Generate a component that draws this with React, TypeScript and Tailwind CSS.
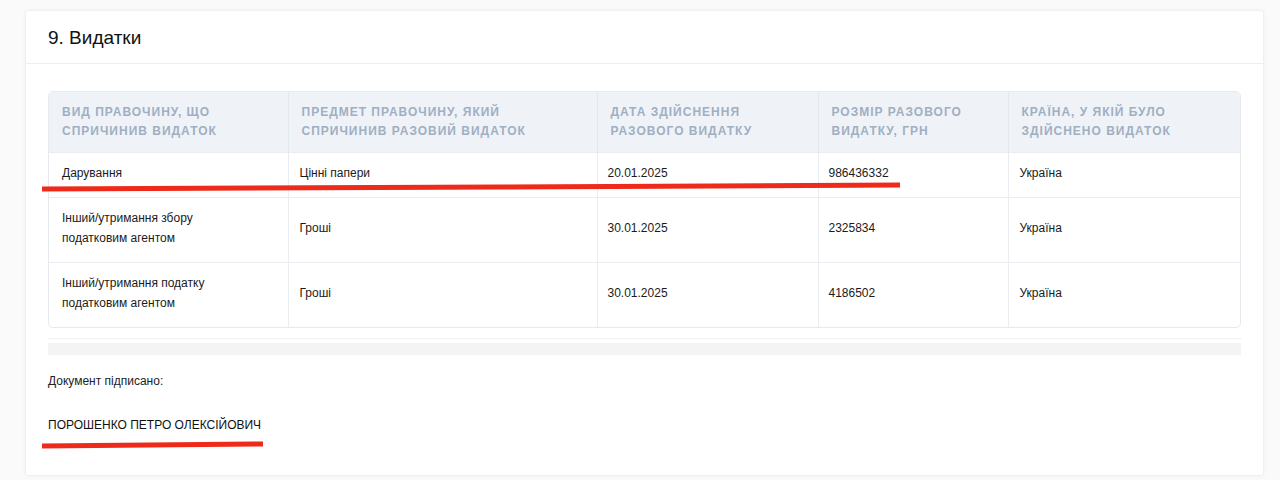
import React from 'react';

interface Expense {
  kind: string;
  subject: string;
  date: string;
  amount: string;
  country: string;
}

const columns = [
  { title: 'Вид правочину, що спричинив видаток', width: 'w-[239px]' },
  { title: 'Предмет правочину, який спричинив разовий видаток', width: 'w-[309px]' },
  { title: 'Дата здійснення разового видатку', width: 'w-[221px]' },
  { title: 'Розмір разового видатку, грн', width: 'w-[190px]' },
  { title: 'Країна, у якій було здійснено видаток', width: 'w-[234px]' },
];

const expenses: Expense[] = [
  { kind: 'Дарування', subject: 'Цінні папери', date: '20.01.2025', amount: '986436332', country: 'Україна' },
  { kind: 'Інший/утримання збору податковим агентом', subject: 'Гроші', date: '30.01.2025', amount: '2325834', country: 'Україна' },
  { kind: 'Інший/утримання податку податковим агентом', subject: 'Гроші', date: '30.01.2025', amount: '4186502', country: 'Україна' },
];

export default function App() {
  return (
    <div className="relative min-h-[480px] bg-[#fafafa] pt-[10px] pl-[25px] pr-[16px] font-['Liberation_Sans',Arial,sans-serif] text-[#1b1b1b]">
      <div className="w-[1239px] h-[466px] bg-white border border-[#f0f0f0] rounded-[3px] shadow-[0_0_4px_rgba(0,0,0,0.04)]">
        {/* Заголовок секції */}
        <div className="h-[53px] flex items-center px-[22px] border-b border-[#eeeeee]">
          <h2 className="text-[19px] leading-none text-[#111]">9. Видатки</h2>
        </div>

        <div className="px-[22px] pt-[27px]">
          <div className="border border-[#e6e9ee] rounded-[5px] overflow-hidden">
            <table className="table-fixed w-[1193px] border-collapse">
              <thead>
                <tr className="bg-[#eff3f8] h-[60px]">
                  {columns.map((col, i) => (
                    <th
                      key={col.title}
                      className={`${col.width} text-left align-middle px-[13px] text-[12px] leading-[19px] font-bold uppercase tracking-[1px] text-[#a0afc2] ${i > 0 ? 'border-l border-[#e3e8ee]' : ''}`}
                    >
                      {col.title}
                    </th>
                  ))}
                </tr>
              </thead>
              <tbody>
                {expenses.map((row, idx) => (
                  <tr key={idx} className={`${idx === 0 ? 'h-[45px]' : 'h-[65px]'} border-t border-[#e9ecf0]`}>
                    <td className="pl-[13px] pr-[14px] pb-[4px] text-[12px] leading-[20px] align-middle">
                      <div className="max-w-[150px]">{row.kind}</div>
                    </td>
                    <td className="px-[11px] pb-[4px] text-[12px] leading-[20px] align-middle border-l border-[#e9ecf0]">{row.subject}</td>
                    <td className="px-[10px] pb-[4px] text-[12px] leading-[20px] align-middle border-l border-[#e9ecf0]">{row.date}</td>
                    <td className="px-[10px] pb-[4px] text-[12px] leading-[20px] align-middle border-l border-[#e9ecf0]">{row.amount}</td>
                    <td className="px-[11px] pb-[4px] text-[12px] leading-[20px] align-middle border-l border-[#e9ecf0]">{row.country}</td>
                  </tr>
                ))}
              </tbody>
            </table>
          </div>

          {/* смуга прокрутки */}
          <div className="mt-[10px] border-t border-[#f0f0f0] pt-[4px]">
            <div className="h-[12px] bg-[#f4f4f4]" />
          </div>

          <p className="mt-[16px] text-[12px] leading-[20px] text-[#222]">Документ підписано:</p>
          <p className="mt-[24px] text-[12px] leading-[20px] text-[#111]">ПОРОШЕНКО ПЕТРО ОЛЕКСІЙОВИЧ</p>
        </div>
      </div>

      {/* червоні позначки поверх документа */}
      <svg className="absolute left-0 top-0 pointer-events-none" width="1280" height="480">
        <path d="M42 189 L500 187 L900 185" stroke="#ee2a1a" strokeWidth="5" fill="none" strokeLinecap="butt" />
        <path d="M42 446 L263 444" stroke="#ee2a1a" strokeWidth="5" fill="none" strokeLinecap="butt" />
      </svg>
    </div>
  );
}
